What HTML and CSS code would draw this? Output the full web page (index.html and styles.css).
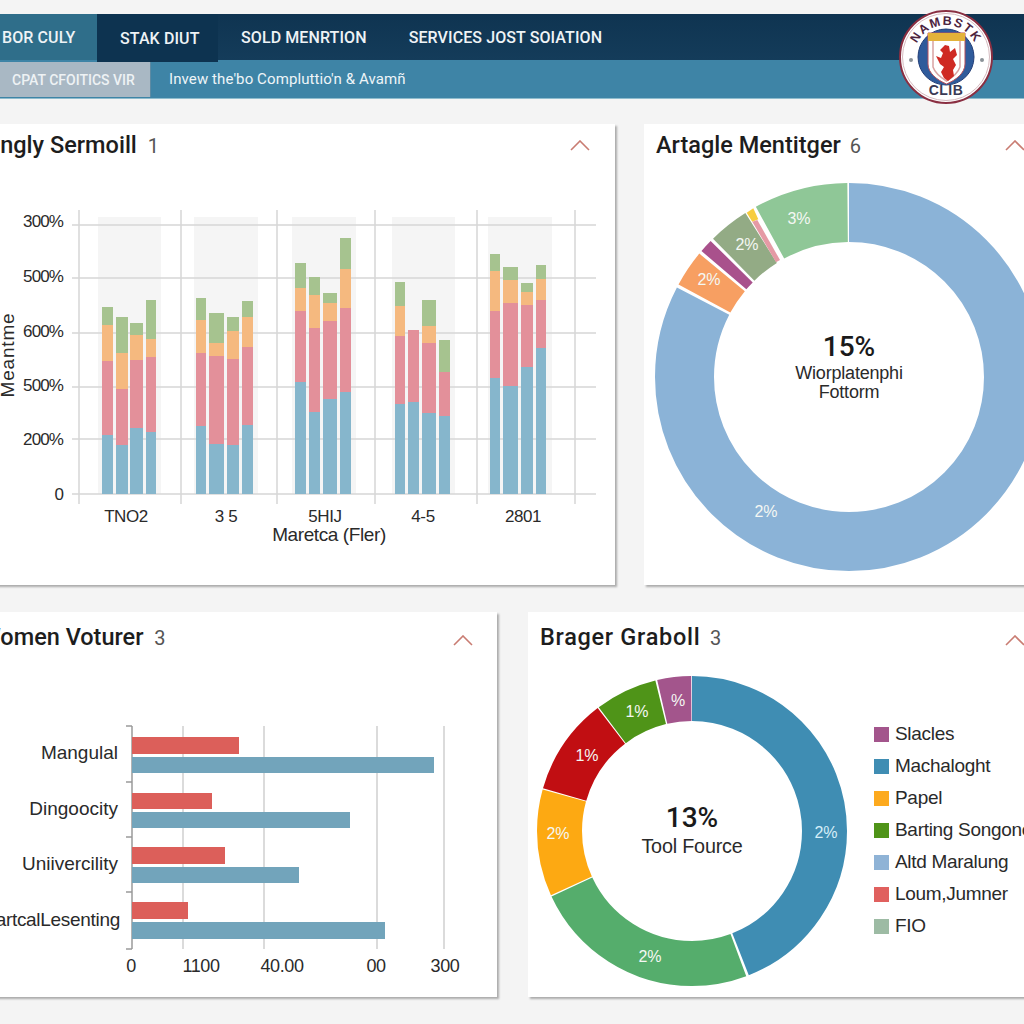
FILE: index.html
```html
<!DOCTYPE html>
<html lang="en">
<head>
<meta charset="utf-8">
<title>Dashboard</title>
<link rel="stylesheet" href="styles.css">
</head>
<body>
<header class="top">
  <nav class="nav">
    <a class="tab tab-first">BOR CULY</a>
    <a class="tab tab-active">STAK DIUT</a>
    <a class="tab">SOLD MENRTION</a>
    <a class="tab">SERVICES JOST SOIATION</a>
  </nav>
  <div class="sub">
    <span class="chip">CPAT CFOITICS VIR</span>
    <span class="crumb">Invew the'bo Compluttio'n &amp; Avamñ</span>
  </div>
  <svg class="logo" viewBox="0 0 94 94" width="94" height="94">
    <defs>
      <path id="logo-arc" d="M15 47A32 32 0 0 1 79 47"/>
    </defs>
    <circle cx="47" cy="47" r="46" fill="#fff" stroke="#8a2f42" stroke-width="2"/>
    <circle cx="47" cy="47" r="43.500" fill="none" stroke="#c9a7ad" stroke-width="0.800"/>
    <circle cx="12" cy="50" r="2" fill="#8a9298"/>
    <circle cx="83" cy="50" r="2" fill="#8a9298"/>
    <circle cx="47" cy="47" r="28" fill="#2f5b9b" stroke="#243f78" stroke-width="1"/>
    <path d="M29 23H66V54C66 63 57 70 47.500 74C38 70 29 63 29 54Z" fill="#fff" stroke="#b9515a" stroke-width="1"/>
    <path d="M29 23H66V31H29Z" fill="#e3b23a"/>
    <path d="M34 31V57C36 63 41 67 47.500 71C54 67 59 63 61 57V31" fill="none" stroke="#d9a3a3" stroke-width="1.500"/>
    <path d="M46 35L50 36L51 42L56 38L58 45L54 49L57 55L54 60L55 66L49 71L45 68L42 62L45 57L41 54L37 46L42 48L44 43L41 40Z" fill="#cf2a23"/>
    <text class="logo-top"><textPath href="#logo-arc" startOffset="50%" text-anchor="middle">NAMBSTK</textPath></text>
    <text class="logo-bottom" x="47" y="85" text-anchor="middle">CLIB</text>
  </svg>
</header>

<main class="board">
  <section class="row row-top">
    <article class="card">
      <div class="card-head head-clip">
        <h2 class="title">Singly Sermoill <span class="count">1</span></h2>
        <svg class="chev chev-1" viewBox="0 0 20 11" width="20" height="11"><path d="M1 10L10 1L19 10"/></svg>
      </div>
      <svg class="plot" viewBox="-30 168 645 417" width="645" height="417">
        <g fill="#f5f5f5">
          <rect x="98" y="217" width="63" height="277"/>
          <rect x="194" y="217" width="64" height="277"/>
          <rect x="292" y="217" width="64" height="277"/>
          <rect x="392" y="217" width="63" height="277"/>
          <rect x="488" y="217" width="64" height="277"/>
        </g>
        <g stroke="#d6d6d6" stroke-width="1.500">
          <path d="M72 225H596M72 278H596M72 333H596M72 387H596M72 439H596M72 494H596"/>
          <path d="M79 210V504M181 210V504M277 210V504M375 210V504M477 210V504M575 210V504"/>
        </g>
        <g fill="#a6c38f">
          <rect x="102" y="307" width="11" height="20"/><rect x="116" y="317" width="12" height="38"/><rect x="130" y="323" width="13" height="14"/><rect x="146" y="300" width="10" height="41"/>
          <rect x="196" y="298" width="10" height="24"/><rect x="209" y="313" width="15" height="32"/><rect x="227" y="317" width="12" height="16"/><rect x="242" y="301" width="11" height="18"/>
          <rect x="295" y="263" width="11" height="27"/><rect x="309" y="277" width="11" height="20"/><rect x="323" y="293" width="14" height="12"/><rect x="340" y="238" width="11" height="33"/>
          <rect x="395" y="282" width="10" height="26"/><rect x="422" y="300" width="14" height="28"/><rect x="439" y="340" width="11" height="34"/>
          <rect x="490" y="254" width="10" height="19"/><rect x="503" y="267" width="15" height="15"/><rect x="521" y="283" width="12" height="11"/><rect x="536" y="265" width="10" height="16"/>
        </g>
        <g fill="#f5b97f">
          <rect x="102" y="325" width="11" height="38"/><rect x="116" y="353" width="12" height="38"/><rect x="130" y="335" width="13" height="27"/><rect x="146" y="339" width="10" height="20"/>
          <rect x="196" y="320" width="10" height="35"/><rect x="209" y="343" width="15" height="15"/><rect x="227" y="331" width="12" height="30"/><rect x="242" y="317" width="11" height="32"/>
          <rect x="295" y="288" width="11" height="25"/><rect x="309" y="295" width="11" height="35"/><rect x="323" y="303" width="14" height="20"/><rect x="340" y="269" width="11" height="41"/>
          <rect x="395" y="306" width="10" height="32"/><rect x="422" y="326" width="14" height="19"/>
          <rect x="490" y="271" width="10" height="42"/><rect x="503" y="280" width="15" height="25"/><rect x="521" y="292" width="12" height="15"/><rect x="536" y="279" width="10" height="23"/>
        </g>
        <g fill="#e3909a">
          <rect x="102" y="361" width="11" height="76"/><rect x="116" y="389" width="12" height="58"/><rect x="130" y="360" width="13" height="70"/><rect x="146" y="357" width="10" height="77"/>
          <rect x="196" y="353" width="10" height="75"/><rect x="209" y="356" width="15" height="90"/><rect x="227" y="359" width="12" height="88"/><rect x="242" y="347" width="11" height="80"/>
          <rect x="295" y="311" width="11" height="73"/><rect x="309" y="328" width="11" height="86"/><rect x="323" y="321" width="14" height="80"/><rect x="340" y="308" width="11" height="86"/>
          <rect x="395" y="336" width="10" height="70"/><rect x="408" y="330" width="11" height="74"/><rect x="422" y="343" width="14" height="72"/><rect x="439" y="372" width="11" height="46"/>
          <rect x="490" y="311" width="10" height="69"/><rect x="503" y="303" width="15" height="85"/><rect x="521" y="305" width="12" height="64"/><rect x="536" y="300" width="10" height="50"/>
        </g>
        <g fill="#86b6cc">
          <rect x="102" y="435" width="11" height="59"/><rect x="116" y="445" width="12" height="49"/><rect x="130" y="428" width="13" height="66"/><rect x="146" y="432" width="10" height="62"/>
          <rect x="196" y="426" width="10" height="68"/><rect x="209" y="444" width="15" height="50"/><rect x="227" y="445" width="12" height="49"/><rect x="242" y="425" width="11" height="69"/>
          <rect x="295" y="382" width="11" height="112"/><rect x="309" y="412" width="11" height="82"/><rect x="323" y="399" width="14" height="95"/><rect x="340" y="392" width="11" height="102"/>
          <rect x="395" y="404" width="10" height="90"/><rect x="408" y="402" width="11" height="92"/><rect x="422" y="413" width="14" height="81"/><rect x="439" y="416" width="11" height="78"/>
          <rect x="490" y="378" width="10" height="116"/><rect x="503" y="386" width="15" height="108"/><rect x="521" y="367" width="12" height="127"/><rect x="536" y="348" width="10" height="146"/>
        </g>
        <g class="axis axis-end axis-tight">
          <text x="63" y="227">300%</text>
          <text x="63" y="282">500%</text>
          <text x="63" y="337">600%</text>
          <text x="63" y="391">500%</text>
          <text x="63" y="445">200%</text>
          <text x="63" y="500">0</text>
        </g>
        <text class="axis axis-mid axis-title" transform="translate(14 355) rotate(-90)">Meantme</text>
        <g class="axis axis-mid">
          <text x="126" y="522">TNO2</text>
          <text x="226" y="522">3 5</text>
          <text x="325" y="522">5HIJ</text>
          <text x="423" y="522">4-5</text>
          <text x="523" y="522">2801</text>
        </g>
        <text class="axis axis-mid axis-lg" x="329" y="541">Maretca (Fler)</text>
      </svg>
    </article>

    <article class="card">
      <div class="card-head">
        <h2 class="title">Artagle Mentitger <span class="count">6</span></h2>
        <svg class="chev chev-2" viewBox="0 0 20 11" width="20" height="11"><path d="M1 10L10 1L19 10"/></svg>
      </div>
      <svg class="plot" viewBox="644 168 400 417" width="400" height="417">
        <g fill="none" stroke-width="59" transform="rotate(-90 849 377)">
          <circle cx="849" cy="377" r="164.500" pathLength="360" stroke="#8bb3d7" stroke-dasharray="297.500 360"/>
          <circle cx="849" cy="377" r="164.500" pathLength="360" stroke="#f79f62" stroke-dasharray="11 360" stroke-dashoffset="-298.500"/>
          <circle cx="849" cy="377" r="164.500" pathLength="360" stroke="#a9518c" stroke-dasharray="4 360" stroke-dashoffset="-310.500"/>
          <circle cx="849" cy="377" r="164.500" pathLength="360" stroke="#93ab85" stroke-dasharray="12.200 360" stroke-dashoffset="-315.500"/>
          <circle cx="849" cy="377" r="164.500" pathLength="360" stroke="#8fc797" stroke-dasharray="28.200 360" stroke-dashoffset="-331.300"/>
        </g>
        <polygon points="746.700,212.700 753.300,208.300 758.300,219.300 752.300,221.700" fill="#f7cd3f"/>
        <polygon points="752.300,221.700 757.300,220 780,260 776,262.300" fill="#e59aa5"/>
        <g class="slice">
          <text x="799" y="224">3%</text>
          <text x="747" y="250">2%</text>
          <text x="709" y="285">2%</text>
          <text x="766" y="517">2%</text>
        </g>
        <text class="big" x="849" y="356">15%</text>
        <text class="mid" x="849" y="379">Wiorplatenphi</text>
        <text class="mid" x="849" y="398">Fottorm</text>
      </svg>
    </article>
  </section>

  <section class="row row-bottom">
    <article class="card">
      <div class="card-head head-clip">
        <h2 class="title">Women Voturer <span class="count">3</span></h2>
        <svg class="chev chev-3" viewBox="0 0 20 11" width="20" height="11"><path d="M1 10L10 1L19 10"/></svg>
      </div>
      <svg class="plot" viewBox="-30 656 527 341" width="527" height="341">
        <path d="M183 726V949M264 726V949M377 726V949M444 726V949" stroke="#cfcfcf" stroke-width="1.500"/>
        <path d="M132 726V949M126 726H132M126 782H132M126 837H132M126 892H132M126 949H132" stroke="#9a9a9a" stroke-width="1.500" fill="none"/>
        <g fill="#dc5f5a">
          <rect x="132" y="737" width="107" height="17"/>
          <rect x="132" y="793" width="80" height="16"/>
          <rect x="132" y="847" width="93" height="17"/>
          <rect x="132" y="902" width="56" height="17"/>
        </g>
        <g fill="#72a4bb">
          <rect x="132" y="757" width="302" height="16"/>
          <rect x="132" y="812" width="218" height="16"/>
          <rect x="132" y="867" width="167" height="16"/>
          <rect x="132" y="922" width="253" height="17"/>
        </g>
        <g class="axis axis-end axis-name">
          <text x="118" y="759">Mangulal</text>
          <text x="118" y="815">Dingoocity</text>
          <text x="118" y="870">Uniivercility</text>
          <text class="axis-name-tight" x="120" y="926">artcalLesenting</text>
        </g>
        <g class="axis axis-mid axis-md">
          <text x="131" y="972">0</text>
          <text x="201" y="972">1100</text>
          <text x="282" y="972">40.00</text>
          <text x="376" y="972">00</text>
          <text x="445" y="972">300</text>
        </g>
      </svg>
    </article>

    <article class="card">
      <div class="card-head">
        <h2 class="title title-wide">Brager Graboll <span class="count">3</span></h2>
        <svg class="chev chev-4" viewBox="0 0 20 11" width="20" height="11"><path d="M1 10L10 1L19 10"/></svg>
      </div>
      <div class="split">
        <svg class="plot" viewBox="528 656 340 341" width="340" height="341">
          <g fill="none" stroke-width="45" transform="rotate(-90 692 831)">
            <circle cx="692" cy="831" r="132.500" pathLength="360" stroke="#3f8db3" stroke-dasharray="158.500 360"/>
            <circle cx="692" cy="831" r="132.500" pathLength="360" stroke="#55ad6c" stroke-dasharray="85.500 360" stroke-dashoffset="-159.500"/>
            <circle cx="692" cy="831" r="132.500" pathLength="360" stroke="#fda912" stroke-dasharray="40 360" stroke-dashoffset="-245.500"/>
            <circle cx="692" cy="831" r="132.500" pathLength="360" stroke="#c10e12" stroke-dasharray="36.500 360" stroke-dashoffset="-286"/>
            <circle cx="692" cy="831" r="132.500" pathLength="360" stroke="#4f9418" stroke-dasharray="23.300 360" stroke-dashoffset="-323"/>
            <circle cx="692" cy="831" r="132.500" pathLength="360" stroke="#a3558c" stroke-dasharray="12.700 360" stroke-dashoffset="-347"/>
          </g>
          <g class="slice">
            <text class="slice-cool" x="826" y="838">2%</text>
            <text x="650" y="962">2%</text>
            <text x="558" y="839">2%</text>
            <text x="587" y="761">1%</text>
            <text x="637" y="717">1%</text>
            <text x="678" y="706">%</text>
          </g>
          <text class="big" x="692" y="827">13%</text>
          <text class="mid mid-lg" x="692" y="853">Tool Fource</text>
        </svg>
        <ul class="legend">
          <li><i class="sw sw-a"></i>Slacles</li>
          <li><i class="sw sw-b"></i>Machaloght</li>
          <li><i class="sw sw-c"></i>Papel</li>
          <li><i class="sw sw-d"></i>Barting Songone</li>
          <li><i class="sw sw-e"></i>Altd Maralung</li>
          <li><i class="sw sw-f"></i>Loum,Jumner</li>
          <li><i class="sw sw-g"></i>FIO</li>
        </ul>
      </div>
    </article>
  </section>
</main>
</body>
</html>
```

FILE: styles.css
```css
* { box-sizing: border-box; }
html, body { margin: 0; height: 1024px; overflow: hidden; }
body {
  width: 1024px;
  background: #f4f4f4;
  font-family: "Liberation Sans", Arial, sans-serif;
  color: #222;
}

.top { position: relative; margin-top: 14px; }
.nav {
  display: flex;
  height: 46px;
  background: linear-gradient(#0f3451, #143c5a);
  font-family: Roboto, "Liberation Sans", sans-serif;
  font-weight: 500;
  font-size: 16px;
  letter-spacing: 0.1px;
  color: #eef3f6;
}
.tab { display: flex; align-items: center; padding-right: 42px; }
.tab-first { width: 97px; padding: 0 0 0 2px; background: #2f6e8a; }
.tab-active {
  width: 121px;
  height: 48px;
  padding: 0 0 0 23px;
  margin-right: 23px;
  background: #0d3350;
}
.sub {
  display: flex;
  align-items: center;
  height: 39px;
  padding-bottom: 1px;
  background: #3e84a6;
  border-bottom: 1px solid #8fbccd;
  color: #eef5f8;
}
.chip {
  display: flex;
  align-items: center;
  width: 151px;
  height: 35px;
  margin-top: 2px;
  padding-left: 12px;
  background: #a9b8c4;
  border-right: 1px solid #5d8aa3;
  font-family: Roboto, "Liberation Sans", sans-serif;
  font-weight: 500;
  font-size: 14px;
  color: #eef2f4;
}
.crumb {
  margin-left: 18px;
  font-family: Roboto, "Liberation Sans", sans-serif;
  font-size: 15px;
  letter-spacing: 0.1px;
}
.logo { position: absolute; left: 899px; top: -4px; }
.logo-top { font: 700 12.500px "Liberation Sans", sans-serif; fill: #4d2440; letter-spacing: 1.500px; }
.logo-bottom { font: 700 14px "Liberation Sans", sans-serif; fill: #3a3a55; letter-spacing: 0.5px; }

.board { display: flex; flex-direction: column; gap: 27px; margin: 25px 0 0 -30px; }
.row { display: grid; height: 461px; }
.row-top { grid-template-columns: 645px 400px; column-gap: 29px; }
.row-bottom { grid-template-columns: 527px 532px; column-gap: 31px; height: 385px; }

.card {
  display: flex;
  flex-direction: column;
  background: #fff;
  box-shadow: 2px 2px 2px rgba(0, 0, 0, 0.3);
  overflow: hidden;
}
.card-head {
  display: flex;
  align-items: center;
  justify-content: space-between;
  height: 44px;
  flex: none;
  padding: 0 0 2px 12px;
}
.row-bottom .card-head { padding-top: 6px; padding-bottom: 0; }
.row-bottom .chev { margin-top: 6px; }
.head-clip { padding-left: 10px; }
.head-clip .count { margin-left: 5px; }
.title {
  margin: 0;
  font-family: Roboto, "Liberation Sans", sans-serif;
  font-weight: 500;
  font-size: 23.500px;
  color: #1d1d1d;
}
.title-wide { letter-spacing: 0.7px; }
.count { margin-left: 3px; font-weight: 400; font-size: 20px; color: #555; }
.chev { fill: none; stroke: #c97c72; stroke-width: 1.600; flex: none; }
.chev-1 { margin-right: 25px; }
.chev-2 { margin-right: 19px; }
.chev-3 { margin-right: 24px; }
.chev-4 { margin-right: 35px; }

.plot { display: block; flex: none; }
.axis { font-family: "Liberation Sans", sans-serif; font-size: 17px; fill: #2a2a2a; letter-spacing: -0.4px; }
.axis-end { text-anchor: end; }
.axis-mid { text-anchor: middle; }
.axis-tight { letter-spacing: -0.9px; }
.axis-title { font-size: 19px; letter-spacing: 0.8px; }
.axis-lg { font-size: 19px; }
.axis-md { font-size: 18px; }
.axis-name { font-size: 19px; letter-spacing: 0; }
.axis-name-tight { letter-spacing: -0.3px; }
.slice { font-family: "Liberation Sans", sans-serif; font-size: 16px; fill: #f4f7f3; text-anchor: middle; }
.slice-cool { fill: #d6eef8; }
.big { font-family: Roboto, "Liberation Sans", sans-serif; font-weight: 500; font-size: 28px; fill: #1a1a1a; text-anchor: middle; }
.mid { font-family: "Liberation Sans", sans-serif; font-size: 18px; fill: #2a2a2a; text-anchor: middle; letter-spacing: -0.2px; }
.mid-lg { font-size: 19.800px; }

.split { display: flex; }
.legend {
  display: flex;
  flex-direction: column;
  list-style: none;
  margin: 0;
  padding: 62px 0 0 6px;
  font-size: 19px;
  color: #2a2a2a;
  letter-spacing: -0.3px;
  white-space: nowrap;
}
.legend li { display: flex; align-items: center; gap: 6px; height: 32px; }
.sw { display: block; width: 15px; height: 15px; flex: none; }
.sw-a { background: #a3558c; }
.sw-b { background: #3f8db3; }
.sw-c { background: #fdaa1e; }
.sw-d { background: #4f9418; }
.sw-e { background: #8fb3d6; }
.sw-f { background: #e0605e; }
.sw-g { background: #9dbba4; }
```
